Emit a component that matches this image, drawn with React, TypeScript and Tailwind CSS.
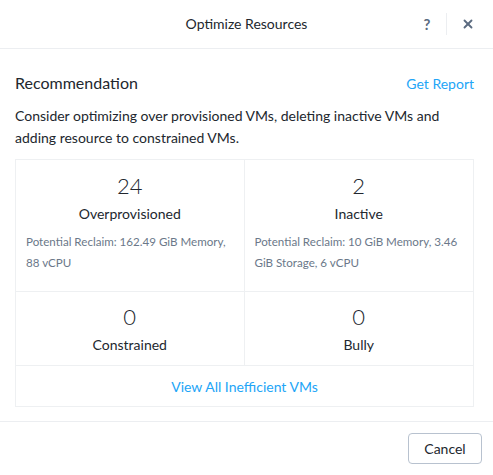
import { X } from "lucide-react"

const cells = [
  { count: 24, label: "Overprovisioned", detail: "Potential Reclaim: 162.49 GiB Memory, 88 vCPU" },
  { count: 2, label: "Inactive", detail: "Potential Reclaim: 10 GiB Memory, 3.46 GiB Storage, 6 vCPU" },
]

const small = [
  { count: 0, label: "Constrained" },
  { count: 0, label: "Bully" },
]

export default function App() {
  return (
    <div className="w-[493px] h-[475px] bg-white text-[#22272e] flex flex-col" style={{ fontFamily: "Lato, 'Open Sans', sans-serif" }}>
      {/* header */}
      <div className="h-[49px] shrink-0 border-b border-[#eceef1] flex items-center relative">
        <div className="absolute inset-x-0 text-center text-[14px] leading-none">Optimize Resources</div>
        <div className="ml-auto flex items-center h-full pr-[4px]">
          <span className="text-[15px] font-bold text-[#5b6b80] w-[38px] text-center">?</span>
          <div className="w-px h-[22px] bg-[#eceef1]" />
          <div className="w-[42px] flex justify-center">
            <X className="w-[14px] h-[14px] text-[#5b6b80]" strokeWidth={3.2} />
          </div>
        </div>
      </div>

      {/* body */}
      <div className="flex-1 pl-[15px] pr-[19px] pt-[22px]">
        <div className="flex items-center justify-between">
          <span className="text-[16px]">Recommendation</span>
          <span className="text-[14px] text-[#22a5f7]">Get Report</span>
        </div>
        <p className="mt-[10px] text-[14px] leading-[22px]">
          Consider optimizing over provisioned VMs, deleting inactive VMs and adding resource to constrained VMs.
        </p>

        <div className="mt-[10px] border border-[#eef0f2]">
          <div className="grid grid-cols-2">
            {cells.map((c, i) => (
              <div key={c.label} className={`h-[132px] border-b border-[#eef0f2] px-[10px] pt-[12px] ${i === 0 ? "border-r" : ""}`}>
                <div className="text-center text-[22px] leading-[28px] font-light">{c.count}</div>
                <div className="text-center text-[14px] font-normal mt-[3px]">{c.label}</div>
                <div className="mt-[7px] text-[11.6px] leading-[21px] text-[#6b7889]">{c.detail}</div>
              </div>
            ))}
          </div>
          <div className="grid grid-cols-2">
            {small.map((c, i) => (
              <div key={c.label} className={`h-[74px] border-b border-[#eef0f2] pt-[11px] ${i === 0 ? "border-r" : ""}`}>
                <div className="text-center text-[22px] leading-[28px] font-light">{c.count}</div>
                <div className="text-center text-[14px] font-normal mt-[3px]">{c.label}</div>
              </div>
            ))}
          </div>
          <div className="h-[40px] flex items-center justify-center text-[14px] text-[#22a5f7]">View All Inefficient VMs</div>
        </div>
      </div>

      {/* footer */}
      <div className="h-[54px] shrink-0 border-t border-[#eceef1] flex items-center justify-end pr-[11px]">
        <button className="h-[31px] w-[74px] rounded-[4px] border border-[#b8c2cf] text-[14px] bg-white">Cancel</button>
      </div>
    </div>
  )
}
